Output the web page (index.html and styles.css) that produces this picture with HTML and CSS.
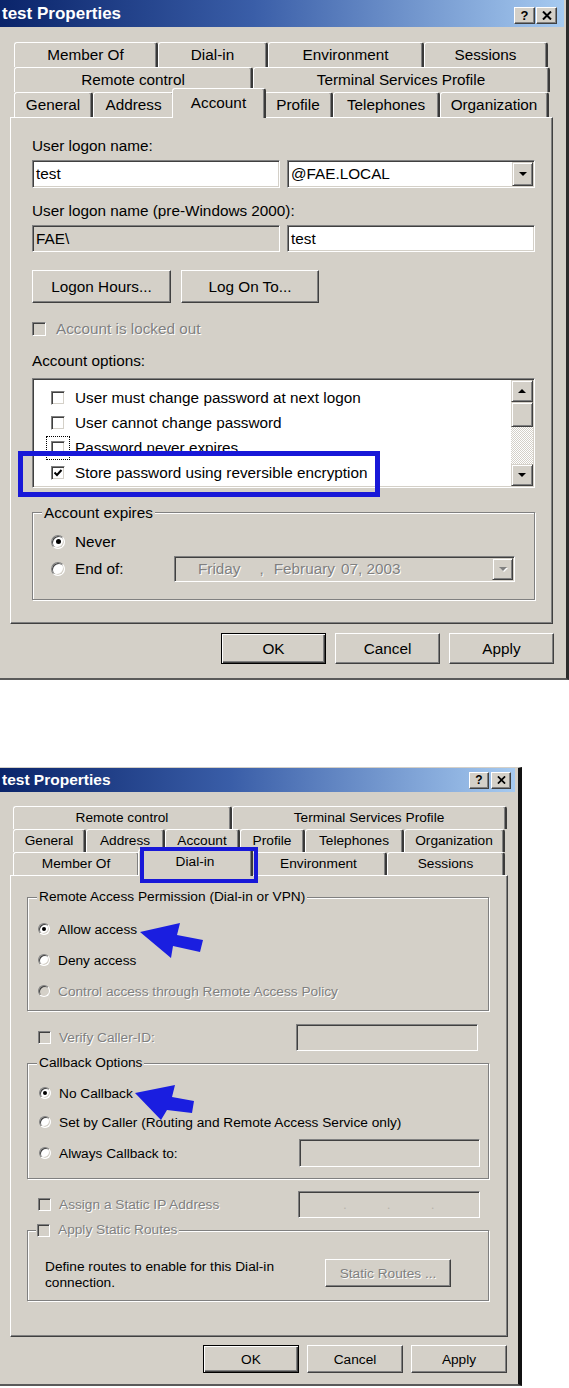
FILE: index.html
```html
<!DOCTYPE html>
<html>
  <head>
    <meta charset="utf-8" />
    <title>test Properties</title>
    <link rel="stylesheet" href="styles.css">
  </head>
  <body>
    <!-- FIRST DIALOG: Account tab -->
    <div class="win win-account">
      <div class="titlebar">
        <span class="title">test Properties</span>
        <span class="capbtns">
          <span class="capbtn">?</span>
          <span class="capbtn">
            <svg viewBox="0 0 10 9" width="10" height="9"><path d="M1 0.5 L9 8.5 M9 0.5 L1 8.5" stroke="#000" stroke-width="2" fill="none"/></svg>
          </span>
        </span>
      </div>

      <div class="tabrows">
        <div class="tabrow a-r1">
          <div class="tab">Member Of</div>
          <div class="tab">Dial-in</div>
          <div class="tab">Environment</div>
          <div class="tab">Sessions</div>
        </div>
        <div class="tabrow a-r2">
          <div class="tab">Remote control</div>
          <div class="tab">Terminal Services Profile</div>
        </div>
        <div class="tabrow a-r3">
          <div class="tab">General</div>
          <div class="tab">Address</div>
          <div class="tab sel">Account</div>
          <div class="tab">Profile</div>
          <div class="tab">Telephones</div>
          <div class="tab">Organization</div>
        </div>
      </div>

      <div class="panel panel-a">
        <div class="lbl">User logon name:</div>
        <div class="fieldrow">
          <div class="field">test</div>
          <div class="field">@FAE.LOCAL<span class="ddbtn"><i class="tri"></i></span></div>
        </div>

        <div class="lbl lbl2">User logon name (pre-Windows 2000):</div>
        <div class="fieldrow row2">
          <div class="field ro">FAE\</div>
          <div class="field">test</div>
        </div>

        <div class="btnrow">
          <div class="btn logon">Logon Hours...</div>
          <div class="btn logto">Log On To...</div>
        </div>

        <div class="opt locked"><span class="cb off"></span><span class="dis">Account is locked out</span></div>

        <div class="lbl lbl3">Account options:</div>

        <!-- Options list with its scrollbar -->
        <div class="list">
          <div class="items">
            <div class="item"><span class="cb"></span>User must change password at next logon</div>
            <div class="item"><span class="cb"></span>User cannot change password</div>
            <div class="item"><span class="cb focus"></span>Password never expires</div>
            <div class="item">
              <span class="cb"><svg viewBox="0 0 12 12" width="12" height="12"><path d="M2.5 5.5 L5 8 L9.5 3" stroke="#000" stroke-width="2" fill="none"/></svg></span>Store password using reversible encryption
            </div>
          </div>
          <div class="vscroll">
            <span class="sbbtn"><i class="tri up"></i></span>
            <span class="sbthumb"></span>
            <span class="sbtrack"></span>
            <span class="sbbtn"><i class="tri"></i></span>
          </div>
        </div>

        <div class="group grp-exp">
          <span class="legend">Account expires</span>
          <div class="opt"><span class="rb on"></span>Never</div>
          <div class="opt endof">
            <span class="rb"></span>End of:
            <div class="field ro date">
              <span class="dis d-day">Friday</span>
              <span class="dis d-comma">,</span>
              <span class="dis d-month">February</span>
              <span class="dis d-num">07, 2003</span>
              <span class="ddbtn off"><i class="tri"></i></span>
            </div>
          </div>
        </div>
      </div>

      <div class="btnbar">
        <div class="btn default">OK</div>
        <div class="btn">Cancel</div>
        <div class="btn">Apply</div>
      </div>

      <!-- highlight drawn over the screenshot -->
      <div class="mark mark-a"></div>
    </div>

    <!-- SECOND DIALOG: Dial-in tab -->
    <div class="win win-dialin">
      <div class="titlebar">
        <span class="title">test Properties</span>
        <span class="capbtns">
          <span class="capbtn">?</span>
          <span class="capbtn">
            <svg viewBox="0 0 10 9" width="9" height="8"><path d="M1 0.5 L9 8.5 M9 0.5 L1 8.5" stroke="#000" stroke-width="2" fill="none"/></svg>
          </span>
        </span>
      </div>

      <div class="tabrows">
        <div class="tabrow d-r1">
          <div class="tab">Remote control</div>
          <div class="tab">Terminal Services Profile</div>
        </div>
        <div class="tabrow d-r2">
          <div class="tab">General</div>
          <div class="tab">Address</div>
          <div class="tab">Account</div>
          <div class="tab">Profile</div>
          <div class="tab">Telephones</div>
          <div class="tab">Organization</div>
        </div>
        <div class="tabrow d-r3">
          <div class="tab">Member Of</div>
          <div class="tab sel">Dial-in</div>
          <div class="tab">Environment</div>
          <div class="tab">Sessions</div>
        </div>
      </div>

      <div class="panel panel-d">
        <div class="group grp-rap">
          <span class="legend">Remote Access Permission (Dial-in or VPN)</span>
          <div class="opt"><span class="rb on"></span>Allow access</div>
          <div class="opt"><span class="rb"></span>Deny access</div>
          <div class="opt"><span class="rb off"></span><span class="dis">Control access through Remote Access Policy</span></div>
        </div>

        <div class="inrow verify">
          <span class="cb off"></span><span class="dis">Verify Caller-ID:</span>
          <div class="field ro"></div>
        </div>

        <div class="group grp-cb">
          <span class="legend">Callback Options</span>
          <div class="opt"><span class="rb on"></span>No Callback</div>
          <div class="opt"><span class="rb"></span>Set by Caller (Routing and Remote Access Service only)</div>
          <div class="opt tall"><span class="rb"></span>Always Callback to:<div class="field ro"></div></div>
        </div>

        <div class="inrow staticip">
          <span class="cb off"></span><span class="dis">Assign a Static IP Address</span>
          <div class="field ro ip"><span>.</span><span>.</span><span>.</span></div>
        </div>

        <div class="group grp-sr">
          <span class="legend"><span class="cb off"></span><span class="dis">Apply Static Routes</span></span>
          <div class="routes-text">Define routes to enable for this Dial-in<br />connection.</div>
          <div class="btn static"><span class="dis">Static Routes ...</span></div>
        </div>
      </div>

      <div class="btnbar">
        <div class="btn default">OK</div>
        <div class="btn">Cancel</div>
        <div class="btn">Apply</div>
      </div>

      <!-- highlight and arrows drawn over the screenshot -->
      <div class="mark mark-d"></div>
      <svg class="arrows" viewBox="0 0 519 600" width="519" height="600">
        <polygon points="140,164 180,155 177,167 203,172 200,184 173,178 171,190" />
        <polygon points="135,325 175,317 172,329 194,333 192,345 167,342 161,352" />
      </svg>
    </div>
  </body>
</html>
```

FILE: styles.css
```css
/* Reset */
* {
  box-sizing: border-box;
  margin: 0;
  padding: 0;
}

body {
  width: 569px;
  background: #ffffff;
  font-family: "Liberation Sans", Arial, sans-serif;
  color: #000000;
}

/* Window frame */
.win {
  position: relative;
  background: #d4d0c8;
  border-right: 3px solid #2b2b2b;
  border-bottom: 2px solid #5a5a5a;
}

.win-account {
  width: 569px;
  height: 680px;
  font-size: 15.3px;
}

.win-dialin {
  width: 522px;
  height: 619px;
  margin-top: 87px;
  font-size: 13.7px;
  border-top: 1px solid #d4d0c8;
  border-right-width: 4px;
  border-right-color: #111;
}

/* Title bar */
.titlebar {
  display: flex;
  align-items: center;
  justify-content: space-between;
  height: 27px;
  margin-right: 2px;
  background: linear-gradient(to right, #0a246a, #3a5ea8 45%, #a6caf0);
}

.title {
  color: #ffffff;
  font-weight: bold;
  font-size: 17px;
  padding-left: 2px;
}

.capbtns {
  display: flex;
  gap: 1px;
  padding: 3px 7px 0 0;
}

.capbtn {
  width: 21px;
  height: 17px;
  display: flex;
  align-items: center;
  justify-content: center;
  background: #d4d0c8;
  border: 1px solid;
  border-color: #ffffff #404040 #404040 #ffffff;
  box-shadow: inset -1px -1px 0 #808080;
  font-weight: bold;
  font-size: 13px;
}

.win-dialin .titlebar {
  height: 24px;
  margin-right: 3px;
}

.win-dialin .title {
  font-size: 15.5px;
}

.win-dialin .capbtns {
  padding: 0 4px 0 0;
  gap: 2px;
}

.win-dialin .capbtn {
  width: 20px;
  height: 17px;
  font-size: 12px;
}

/* Tabs */
.tabrows {
  margin-top: 15px;
  padding-left: 14px;
}

.tabrow {
  display: grid;
  height: 25px;
}

.a-r1 { grid-template-columns: 144px 110px 156px 124px; }
.a-r2 { grid-template-columns: 239px 297px; }
.a-r3 { grid-template-columns: 79px 82px 89px 69px 107px 109px; }

.tab {
  border-top: 1px solid #ffffff;
  border-left: 1px solid #ffffff;
  border-right: 2px solid #3a3a3a;
  border-radius: 3px 3px 0 0;
  box-shadow: inset -1px 0 0 #808080;
  text-align: center;
  line-height: 24px;
  white-space: nowrap;
}

.tab.sel {
  position: relative;
  z-index: 1;
  margin: -4px -2px -1px -3px;
  background: #d4d0c8;
  line-height: 28px;
}

.win-dialin .tabrows {
  margin-top: 14px;
  padding-left: 13px;
}

.win-dialin .tabrow {
  height: 23px;
}

.win-dialin .tab {
  line-height: 22px;
}

.win-dialin .tab.sel {
  margin: -3px -2px -1px -2px;
  line-height: 24px;
}

.d-r1 { grid-template-columns: 219px 275px; }
.d-r2 { grid-template-columns: 73px 79px 75px 65px 99px 101px; }
.d-r3 { grid-template-columns: 127px 111px 136px 118px; }

/* Tab page */
.panel {
  margin-left: 10px;
  border: 1px solid;
  border-color: #ffffff #404040 #404040 #ffffff;
  box-shadow: inset -1px -1px 0 #808080;
}

.panel-a {
  width: 543px;
  height: 507px;
  padding: 19px 17px 0 21px;
}

.panel-d {
  width: 498px;
  height: 462px;
  padding: 21px 18px 0 16px;
}

.lbl {
  height: 17px;
  line-height: 17px;
}

.lbl2 { margin-top: 14px; }
.lbl3 { margin-top: 15px; }

/* Edit boxes */
.fieldrow {
  display: flex;
  gap: 7px;
  height: 28px;
  margin-top: 6px;
}

.fieldrow .field {
  width: 248px;
}

.row2 {
  height: 27px;
}

.field {
  display: flex;
  align-items: center;
  padding: 1px 1px 1px 3px;
  background: #ffffff;
  border: 1px solid;
  border-color: #808080 #ffffff #ffffff #808080;
  box-shadow: inset 1px 1px 0 #404040, inset -1px -1px 0 #d4d0c8;
  white-space: nowrap;
}

.field.ro {
  background: #d4d0c8;
}

.ddbtn {
  margin-left: auto;
  align-self: stretch;
  width: 21px;
  display: flex;
  align-items: center;
  justify-content: center;
  background: #d4d0c8;
  border: 1px solid;
  border-color: #d4d0c8 #404040 #404040 #d4d0c8;
  box-shadow: inset 1px 1px 0 #ffffff, inset -1px -1px 0 #808080;
}

.tri {
  width: 0;
  height: 0;
  border-left: 4px solid transparent;
  border-right: 4px solid transparent;
  border-top: 4px solid #000000;
}

.tri.up {
  border-top: 0;
  border-bottom: 4px solid #000000;
}

.ddbtn.off .tri {
  border-top-color: #808080;
  filter: drop-shadow(1px 1px 0 #ffffff);
}

/* Push buttons */
.btn {
  display: flex;
  align-items: center;
  justify-content: center;
  background: #d4d0c8;
  border: 1px solid;
  border-color: #ffffff #404040 #404040 #ffffff;
  box-shadow: inset -1px -1px 0 #808080;
  white-space: nowrap;
}

.btn.default {
  border-color: #000000;
  box-shadow: inset 1px 1px 0 #ffffff, inset -1px -1px 0 #404040, inset -2px -2px 0 #808080;
}

.btnrow {
  display: flex;
  gap: 10px;
  height: 33px;
  margin-top: 18px;
}

.logon { width: 139px; }
.logto { width: 138px; }

/* Check boxes and radio buttons */
.cb {
  flex: none;
  width: 14px;
  height: 14px;
  display: flex;
  align-items: center;
  justify-content: center;
  background: #ffffff;
  border: 1px solid;
  border-color: #808080 #ffffff #ffffff #808080;
  box-shadow: inset 1px 1px 0 #404040, inset -1px -1px 0 #d4d0c8;
}

.cb.off {
  background: #d4d0c8;
}

.cb.focus {
  outline: 1px dotted #000000;
  outline-offset: 4px;
}

.rb {
  flex: none;
  width: 14px;
  height: 14px;
  display: flex;
  align-items: center;
  justify-content: center;
  border-radius: 50%;
  background: #ffffff;
  border: 1px solid;
  border-color: #808080 #ffffff #ffffff #808080;
  box-shadow: inset 1px 1px 0 #404040, inset -1px -1px 0 #d4d0c8;
}

.rb.on::after {
  content: "";
  width: 5px;
  height: 5px;
  border-radius: 50%;
  background: #000000;
}

.rb.off {
  background: #d4d0c8;
}

.dis {
  color: #808080;
  text-shadow: 1px 1px 0 #ffffff;
}

.opt {
  display: flex;
  align-items: center;
  gap: 10px;
  height: 17px;
  white-space: nowrap;
}

.locked {
  margin-top: 17px;
}

/* Account options list */
.list {
  display: flex;
  height: 110px;
  margin-top: 9px;
  padding: 1px;
  background: #ffffff;
  border: 1px solid;
  border-color: #808080 #ffffff #ffffff #808080;
  box-shadow: inset 1px 1px 0 #404040, inset -1px -1px 0 #d4d0c8;
}

.items {
  flex: 1;
  padding: 5px 0 0 17px;
}

.item {
  display: flex;
  align-items: center;
  gap: 10px;
  height: 25px;
  white-space: nowrap;
}

.vscroll {
  width: 22px;
  display: flex;
  flex-direction: column;
}

.sbbtn,
.sbthumb {
  display: flex;
  align-items: center;
  justify-content: center;
  background: #d4d0c8;
  border: 1px solid;
  border-color: #d4d0c8 #404040 #404040 #d4d0c8;
  box-shadow: inset 1px 1px 0 #ffffff, inset -1px -1px 0 #808080;
}

.sbbtn { height: 22px; }
.sbthumb { height: 25px; }

.sbtrack {
  flex: 1;
  background: repeating-conic-gradient(#ffffff 0% 25%, #d4d0c8 0% 50%) 0 0 / 2px 2px;
}

/* Group boxes */
.group {
  position: relative;
  border: 1px solid #808080;
  box-shadow: 1px 1px 0 #ffffff, inset 1px 1px 0 #ffffff;
}

.legend {
  position: absolute;
  top: -9px;
  left: 9px;
  padding: 0 2px;
  background: #d4d0c8;
  line-height: 17px;
  white-space: nowrap;
}

.grp-exp {
  height: 88px;
  margin-top: 24px;
  padding: 20px 19px 0 18px;
}

.endof {
  height: 26px;
  margin-top: 6px;
}

.date {
  margin-left: auto;
  width: 341px;
  height: 26px;
  padding-left: 23px;
}

.d-comma { margin-left: 19px; }
.d-month { margin-left: 10px; }
.d-num { margin-left: 6px; }

/* Dial-in page */
.win-dialin .legend {
  line-height: 16px;
}

.win-dialin .opt {
  height: 16px;
  gap: 8px;
}

.win-dialin .rb {
  width: 12px;
  height: 12px;
}

.win-dialin .rb.on::after {
  width: 4px;
  height: 4px;
}

.win-dialin .cb {
  width: 13px;
  height: 13px;
}

.grp-rap {
  height: 114px;
  padding: 23px 0 0 10px;
}

.grp-rap .opt + .opt {
  margin-top: 15px;
}

.inrow {
  display: flex;
  align-items: center;
  gap: 8px;
  height: 27px;
  margin-top: 13px;
  padding: 0 11px;
  white-space: nowrap;
}

.inrow .field {
  margin-left: auto;
  width: 182px;
  height: 27px;
}

.grp-cb {
  height: 116px;
  margin-top: 12px;
  padding: 21px 8px 0 11px;
}

.grp-cb .opt + .opt {
  margin-top: 13px;
}

.grp-cb .opt.tall {
  height: 28px;
  margin-top: 9px;
}

.opt.tall .field {
  margin-left: auto;
  width: 181px;
  height: 28px;
}

.staticip {
  margin-top: 12px;
  padding-right: 9px;
}

.ip {
  gap: 40px;
  padding-left: 44px;
  color: #b8b4ac;
}

.grp-sr {
  display: flex;
  align-items: flex-start;
  height: 71px;
  margin-top: 12px;
  padding: 28px 37px 0 17px;
}

.grp-sr .legend {
  display: flex;
  align-items: center;
  gap: 8px;
  left: 8px;
  padding: 0 2px 0 1px;
}

.routes-text {
  line-height: 16px;
}

.btn.static {
  margin-left: auto;
  width: 126px;
  height: 28px;
}

/* OK / Cancel / Apply */
.btnbar {
  display: flex;
  justify-content: flex-end;
  gap: 9px;
  height: 31px;
  margin-top: 9px;
  padding-right: 12px;
}

.btnbar .btn {
  width: 105px;
}

.win-dialin .btnbar {
  gap: 8px;
  height: 28px;
  margin-top: 8px;
  padding-right: 11px;
}

.win-dialin .btnbar .btn {
  width: 96px;
}

/* Blue annotations over the screenshots */
.mark {
  position: absolute;
  z-index: 2;
  border: 5px solid #1818d8;
}

.mark-a {
  left: 18px;
  top: 451px;
  width: 362px;
  height: 46px;
}

.mark-d {
  left: 140px;
  top: 79px;
  width: 118px;
  height: 36px;
  border-width: 4px;
}

.arrows {
  position: absolute;
  left: 0;
  top: 0;
  z-index: 3;
  fill: #1a1ee0;
}
```
